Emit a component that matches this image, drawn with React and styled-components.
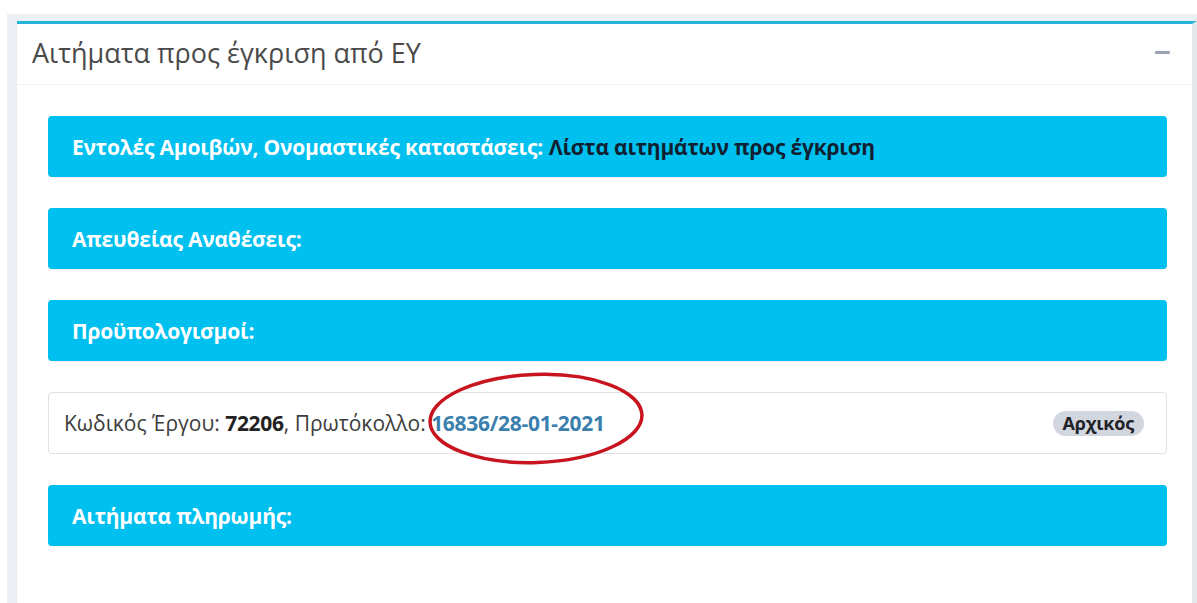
import React from "react";
import styled, { createGlobalStyle } from "styled-components";

const GlobalStyle = createGlobalStyle`
  html, body { margin: 0; padding: 0; background: #ffffff; }
  body { font-family: "Open Sans", "Noto Sans", sans-serif; color: #333; }
  * { box-sizing: border-box; }
`;

const Page = styled.div`
  padding-top: 14px;
  height: 603px;
  overflow: hidden;
`;

const ContentWrapper = styled.div`
  margin-left: 7px;
  background: #ecf0f5;
  padding: 7px 0 0 10px;
  height: 100%;
`;

const Box = styled.section`
  background: #ffffff;
  border-top: 3px solid #27b4dc;
  border-right: 5px solid #e6e8ec;
  box-shadow: 0 1px 1px rgba(0, 0, 0, 0.08);
  height: 100%;
`;

const BoxHeader = styled.header`
  display: flex;
  align-items: center;
  justify-content: space-between;
  height: 61px;
  padding: 0 22px 0 15px;
  border-bottom: 1px solid #f2f3f5;
`;

const BoxTitle = styled.h3`
  margin: -4px 0 0;
  font-family: "Open Sans", sans-serif;
  font-weight: 400;
  font-size: 27px;
  color: #4a4a4a;
  line-height: 1;
`;

const CollapseButton = styled.button`
  border: 0;
  background: transparent;
  padding: 4px 0;
  cursor: pointer;
  display: flex;
  align-items: center;
  margin-top: -4px;
`;

const MinusBar = styled.span`
  display: block;
  width: 15px;
  height: 3px;
  border-radius: 1px;
  background: #9aa2b4;
`;

const BoxBody = styled.div`
  display: flex;
  flex-direction: column;
  gap: 31px;
  padding: 31px 25px 0 31px;
`;

const SectionBar = styled.div`
  display: flex;
  align-items: center;
  height: 61px;
  padding: 0 24px;
  background: #00c0ef;
  border-radius: 4px;
  box-shadow: 0 1px 2px rgba(0, 0, 0, 0.06);
  font-family: "Open Sans", sans-serif;
  font-weight: 700;
  font-size: 21px;
  color: #ffffff;
  letter-spacing: -0.2px;
`;

const BarLink = styled.a`
  margin-left: 6px;
  color: #102030;
  text-decoration: none;
`;

const ListItem = styled.div`
  position: relative;
  display: flex;
  align-items: center;
  justify-content: space-between;
  height: 62px;
  padding: 0 22px 0 15px;
  border: 1px solid #dfe1e5;
  border-radius: 4px;
  font-size: 21px;
  color: #3d3d3d;
`;

const Strong = styled.b`
  font-weight: 700;
  letter-spacing: -0.3px;
  color: ${(p) => p.$color || "#222"};
`;

const Badge = styled.span`
  display: inline-flex;
  align-items: center;
  height: 25px;
  padding: 0 10px;
  border-radius: 13px;
  background: #d2d6de;
  color: #1e2227;
  font-weight: 700;
  font-size: 18px;
  letter-spacing: -0.2px;
`;

const Annotation = styled.svg`
  position: absolute;
  left: 378px;
  top: -22px;
  width: 218px;
  height: 95px;
  overflow: visible;
  pointer-events: none;
  transform: rotate(-2deg);
`;

export default function App() {
  return (
    <>
      <GlobalStyle />
      <Page>
        <ContentWrapper>
          <Box>
            <BoxHeader>
              <BoxTitle>Αιτήματα προς έγκριση από ΕΥ</BoxTitle>
              <CollapseButton aria-label="collapse">
                <MinusBar />
              </CollapseButton>
            </BoxHeader>
            <BoxBody>
              <SectionBar>
                Εντολές Αμοιβών, Ονομαστικές καταστάσεις:
                <BarLink href="#">Λίστα αιτημάτων προς έγκριση</BarLink>
              </SectionBar>
              <SectionBar>Απευθείας Αναθέσεις:</SectionBar>
              <SectionBar>Προϋπολογισμοί:</SectionBar>
              <ListItem>
                <span>
                  Κωδικός Έργου: <Strong>72206</Strong>, Πρωτόκολλο:{" "}
                  <Strong $color="#3b7fae">16836/28-01-2021</Strong>
                </span>
                <Badge>Αρχικός</Badge>
                <Annotation viewBox="0 0 218 95">
                  <ellipse
                    cx="109"
                    cy="47.5"
                    rx="106"
                    ry="44"
                    fill="none"
                    stroke="#c8141e"
                    strokeWidth="3.5"
                  />
                </Annotation>
              </ListItem>
              <SectionBar>Αιτήματα πληρωμής:</SectionBar>
            </BoxBody>
          </Box>
        </ContentWrapper>
      </Page>
    </>
  );
}
